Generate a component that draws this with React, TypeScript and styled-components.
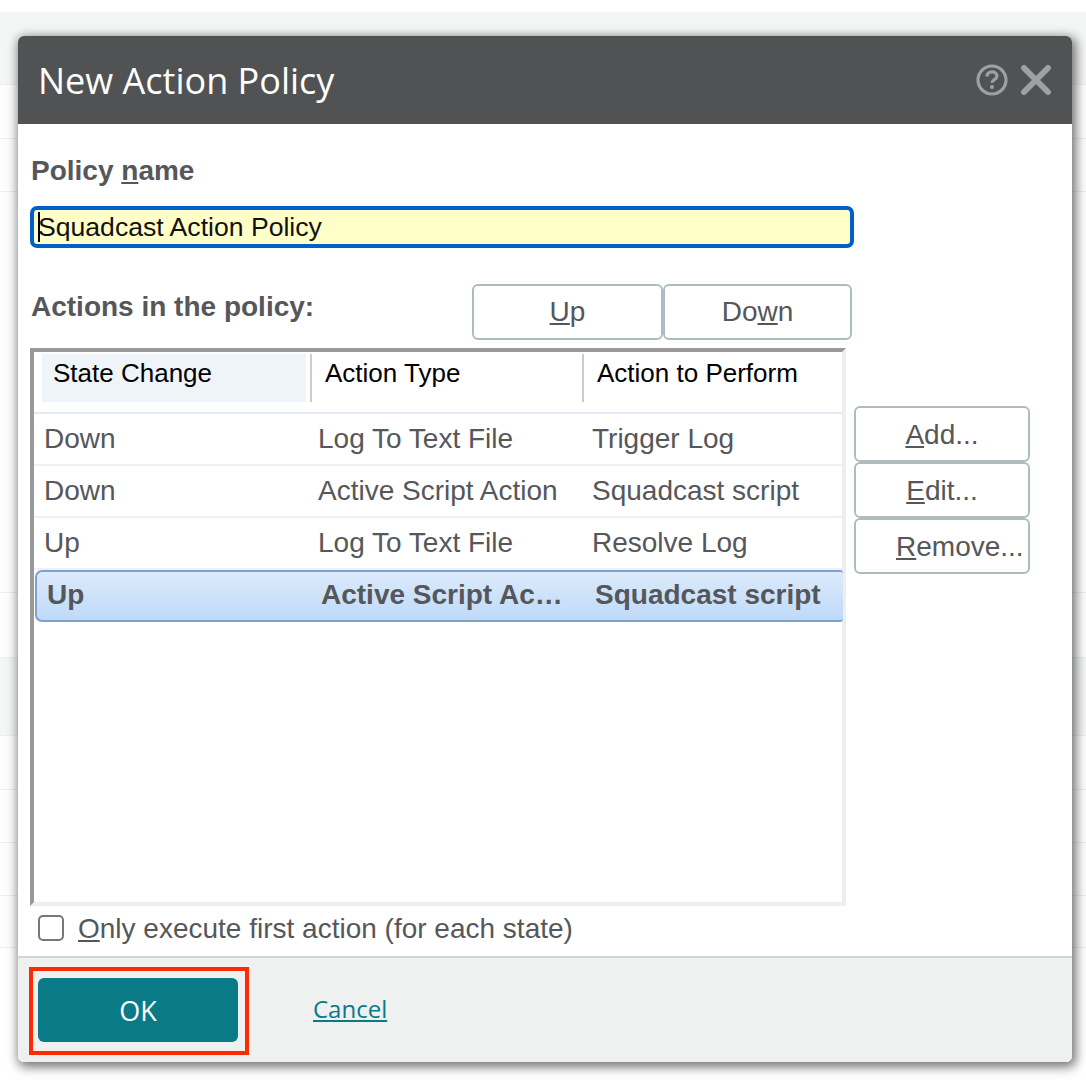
import React from 'react';
import styled, { createGlobalStyle } from 'styled-components';

const GlobalStyle = createGlobalStyle`
  html, body {
    margin: 0;
    padding: 0;
    background: #fff;
  }
  * {
    box-sizing: border-box;
  }
`;

const Page = styled.div`
  position: relative;
  width: 1086px;
  height: 1088px;
  padding-top: 12px;
  overflow: hidden;
  background: #fff;
`;

const BackRow = styled.div<{ $h: number; $shaded?: boolean }>`
  height: ${({ $h }) => $h}px;
  background: ${({ $shaded }) => ($shaded ? '#f4f6f5' : '#fdfdfd')};
  border-bottom: 1px solid #eceeee;
`;

const Dialog = styled.div`
  position: absolute;
  left: 18px;
  top: 36px;
  width: 1054px;
  height: 1026px;
  display: flex;
  flex-direction: column;
  background: #fff;
  border-radius: 6px;
  overflow: hidden;
`;

const DialogShadow = styled.div`
  position: absolute;
  left: 18px;
  top: 36px;
  width: 1054px;
  height: 1026px;
  border-radius: 6px;
  box-shadow: 2px 3px 11px 2px rgba(0, 0, 0, 0.55);
`;

const Header = styled.div`
  height: 88px;
  flex-shrink: 0;
  display: flex;
  align-items: center;
  justify-content: space-between;
  padding: 0 21px 0 20px;
  background: #515254;
`;

const Title = styled.h1`
  margin: 0;
  font-family: 'Open Sans', sans-serif;
  font-size: 36px;
  font-weight: 400;
  color: #fff;
`;

const Icons = styled.div`
  display: flex;
  align-items: center;
  gap: 13px;
`;

const Body = styled.div`
  flex: 1;
  padding: 0 12px;
  font-family: 'Liberation Sans', Arial, sans-serif;
  color: #55575a;
`;

const Label = styled.div`
  padding-left: 1px;
  font-size: 28px;
  font-weight: 700;
  line-height: 32px;
`;

const NameLabel = styled(Label)`
  padding-top: 31px;
`;

const NameInput = styled.div`
  position: relative;
  width: 824px;
  height: 42px;
  margin-top: 19px;
  padding-left: 4px;
  display: flex;
  align-items: center;
  background: #ffffc8;
  border: 4px solid #0060c8;
  border-radius: 7px;
  font-size: 26.6px;
  color: #111;

  &::before {
    content: '';
    position: absolute;
    left: 4px;
    top: 2px;
    bottom: 2px;
    width: 2px;
    background: #000;
  }
`;

const Toolbar = styled.div`
  width: 822px;
  height: 56px;
  margin-top: 36px;
  display: flex;
  align-items: flex-start;
`;

const ToolbarLabel = styled(Label)`
  flex: 1;
  padding-top: 7px;
`;

const Button = styled.div<{ $w?: number; $pad?: number }>`
  width: ${({ $w }) => $w ?? 176}px;
  height: 56px;
  flex-shrink: 0;
  display: flex;
  align-items: center;
  justify-content: ${({ $pad }) => ($pad ? 'flex-start' : 'center')};
  padding-left: ${({ $pad }) => $pad ?? 0}px;
  background: #fff;
  border: 2px solid #afbcbf;
  border-radius: 6px;
  font-size: 28px;
  color: #55575a;
`;

const SideButton = styled(Button)`
  padding-top: 2px;
`;

const ListArea = styled.div`
  display: flex;
  align-items: flex-start;
  margin-top: 8px;
`;

const Table = styled.div`
  width: 816px;
  height: 558px;
  flex-shrink: 0;
  border-style: solid;
  border-width: 4px;
  border-color: #999 #eee #eee #999;
`;

const HeadRow = styled.div`
  height: 62px;
  padding: 2px 0 0 8px;
  display: flex;
  align-items: flex-start;
  border-bottom: 2px solid #e2ebf4;
`;

const HeadCell = styled.div<{ $w: number; $active?: boolean }>`
  width: ${({ $w }) => $w}px;
  height: 48px;
  padding-left: ${({ $active }) => ($active ? 11 : 13)}px;
  margin-right: ${({ $active }) => ($active ? 4 : 0)}px;
  line-height: 39px;
  font-size: 26px;
  color: #000;
  background: ${({ $active }) => ($active ? '#eff4f9' : 'transparent')};
`;

const Divider = styled.div`
  width: 2px;
  height: 48px;
  background: #ccc;
`;

const Row = styled.div`
  height: 52px;
  display: grid;
  grid-template-columns: 274px 274px 1fr;
  align-items: center;
  padding-left: 10px;
  border-bottom: 2px solid #eef1f4;
  font-size: 28px;
`;

const SelectedRow = styled(Row)`
  width: 808px;
  margin-left: 1px;
  padding-bottom: 2px;
  font-weight: 700;
  background: linear-gradient(#dceafb, #bedaf9);
  border: 2px solid #7da2cc;
  border-right: none;
  border-radius: 7px 3px 3px 7px;
`;

const Cell = styled.div`
  overflow: hidden;
  white-space: nowrap;
  text-overflow: ellipsis;
  padding-right: 30px;

  &:last-child {
    padding-right: 0;
  }
`;

const SideButtons = styled.div`
  margin: 58px 0 0 8px;
  display: flex;
  flex-direction: column;
`;

const CheckLine = styled.div`
  display: flex;
  align-items: center;
  height: 46px;
  padding-left: 8px;
  font-size: 28px;
`;

const CheckBox = styled.div`
  width: 26px;
  height: 26px;
  margin: -2px 14px 0 0;
  background: #fff;
  border: 2px solid #777;
  border-radius: 5px;
`;

const Footer = styled.div`
  height: 106px;
  flex-shrink: 0;
  display: flex;
  align-items: flex-start;
  padding: 9px 0 0 11px;
  background: #eff1f1;
  border-top: 2px solid #cfd8dc;
`;

const Marker = styled.div`
  padding: 7px 7px 9px 5px;
  border: 4px solid #ff2a00;
`;

const OkButton = styled.div`
  width: 200px;
  height: 64px;
  display: flex;
  align-items: center;
  justify-content: center;
  background: #0a7a87;
  border-radius: 6px;
  font-family: 'Open Sans', sans-serif;
  font-size: 27px;
  color: #fff;
`;

const CancelLink = styled.a`
  margin: 25px 0 0 64px;
  font-family: 'Open Sans', sans-serif;
  font-size: 24px;
  line-height: 34px;
  color: #0a7a87;
  text-decoration: underline;
`;

const rows = [
  ['Down', 'Log To Text File', 'Trigger Log'],
  ['Down', 'Active Script Action', 'Squadcast script'],
  ['Up', 'Log To Text File', 'Resolve Log'],
];

function HelpIcon() {
  return (
    <svg width="32" height="32" viewBox="0 0 32 32" fill="none" stroke="#9aa2a6">
      <circle cx="16" cy="16" r="14" strokeWidth="3.2" />
      <path d="M11 12.5c0-3 2.2-4.6 5-4.6s5 1.6 5 4.2c0 3.6-5 3.4-5 6.6" strokeWidth="3.2" />
      <circle cx="16" cy="23" r="2" fill="#9aa2a6" stroke="none" />
    </svg>
  );
}

function CloseIcon() {
  return (
    <svg width="30" height="30" viewBox="0 0 30 30" fill="none" stroke="#9aa2a6">
      <path d="M3 3l24 24M27 3L3 27" strokeWidth="6" strokeLinecap="round" />
    </svg>
  );
}

function App() {
  return (
    <Page>
      <GlobalStyle />
      <BackRow $h={73} $shaded />
      <BackRow $h={54} />
      <BackRow $h={53} />
      <BackRow $h={401} />
      <BackRow $h={65} />
      <BackRow $h={78} $shaded />
      <BackRow $h={54} />
      <BackRow $h={53} />
      <BackRow $h={53} />
      <BackRow $h={52} />
      <DialogShadow />
      <Dialog>
        <Header>
          <Title>New Action Policy</Title>
          <Icons>
            <HelpIcon />
            <CloseIcon />
          </Icons>
        </Header>
        <Body>
          <NameLabel>
            Policy <u>n</u>ame
          </NameLabel>
          <NameInput>Squadcast Action Policy</NameInput>
          <Toolbar>
            <ToolbarLabel>Actions in the policy:</ToolbarLabel>
            <Button $w={191}>
              <span>
                <u>U</u>p
              </span>
            </Button>
            <Button $w={189}>
              <span>
                Do<u>w</u>n
              </span>
            </Button>
          </Toolbar>
          <ListArea>
            <Table>
              <HeadRow>
                <HeadCell $w={264} $active>
                  State Change
                </HeadCell>
                <Divider />
                <HeadCell $w={270}>Action Type</HeadCell>
                <Divider />
                <HeadCell $w={240}>Action to Perform</HeadCell>
              </HeadRow>
              {rows.map((row, i) => (
                <Row key={i}>
                  {row.map(text => (
                    <Cell key={text}>{text}</Cell>
                  ))}
                </Row>
              ))}
              <SelectedRow>
                <Cell>Up</Cell>
                <Cell>Active Script Action</Cell>
                <Cell>Squadcast script</Cell>
              </SelectedRow>
            </Table>
            <SideButtons>
              <SideButton>
                <span>
                  <u>A</u>dd...
                </span>
              </SideButton>
              <SideButton>
                <span>
                  <u>E</u>dit...
                </span>
              </SideButton>
              <SideButton $pad={40}>
                <span>
                  <u>R</u>emove...
                </span>
              </SideButton>
            </SideButtons>
          </ListArea>
          <CheckLine>
            <CheckBox />
            <span>
              <u>O</u>nly execute first action (for each state)
            </span>
          </CheckLine>
        </Body>
        <Footer>
          <Marker>
            <OkButton>OK</OkButton>
          </Marker>
          <CancelLink>Cancel</CancelLink>
        </Footer>
      </Dialog>
    </Page>
  );
}

export default App;
